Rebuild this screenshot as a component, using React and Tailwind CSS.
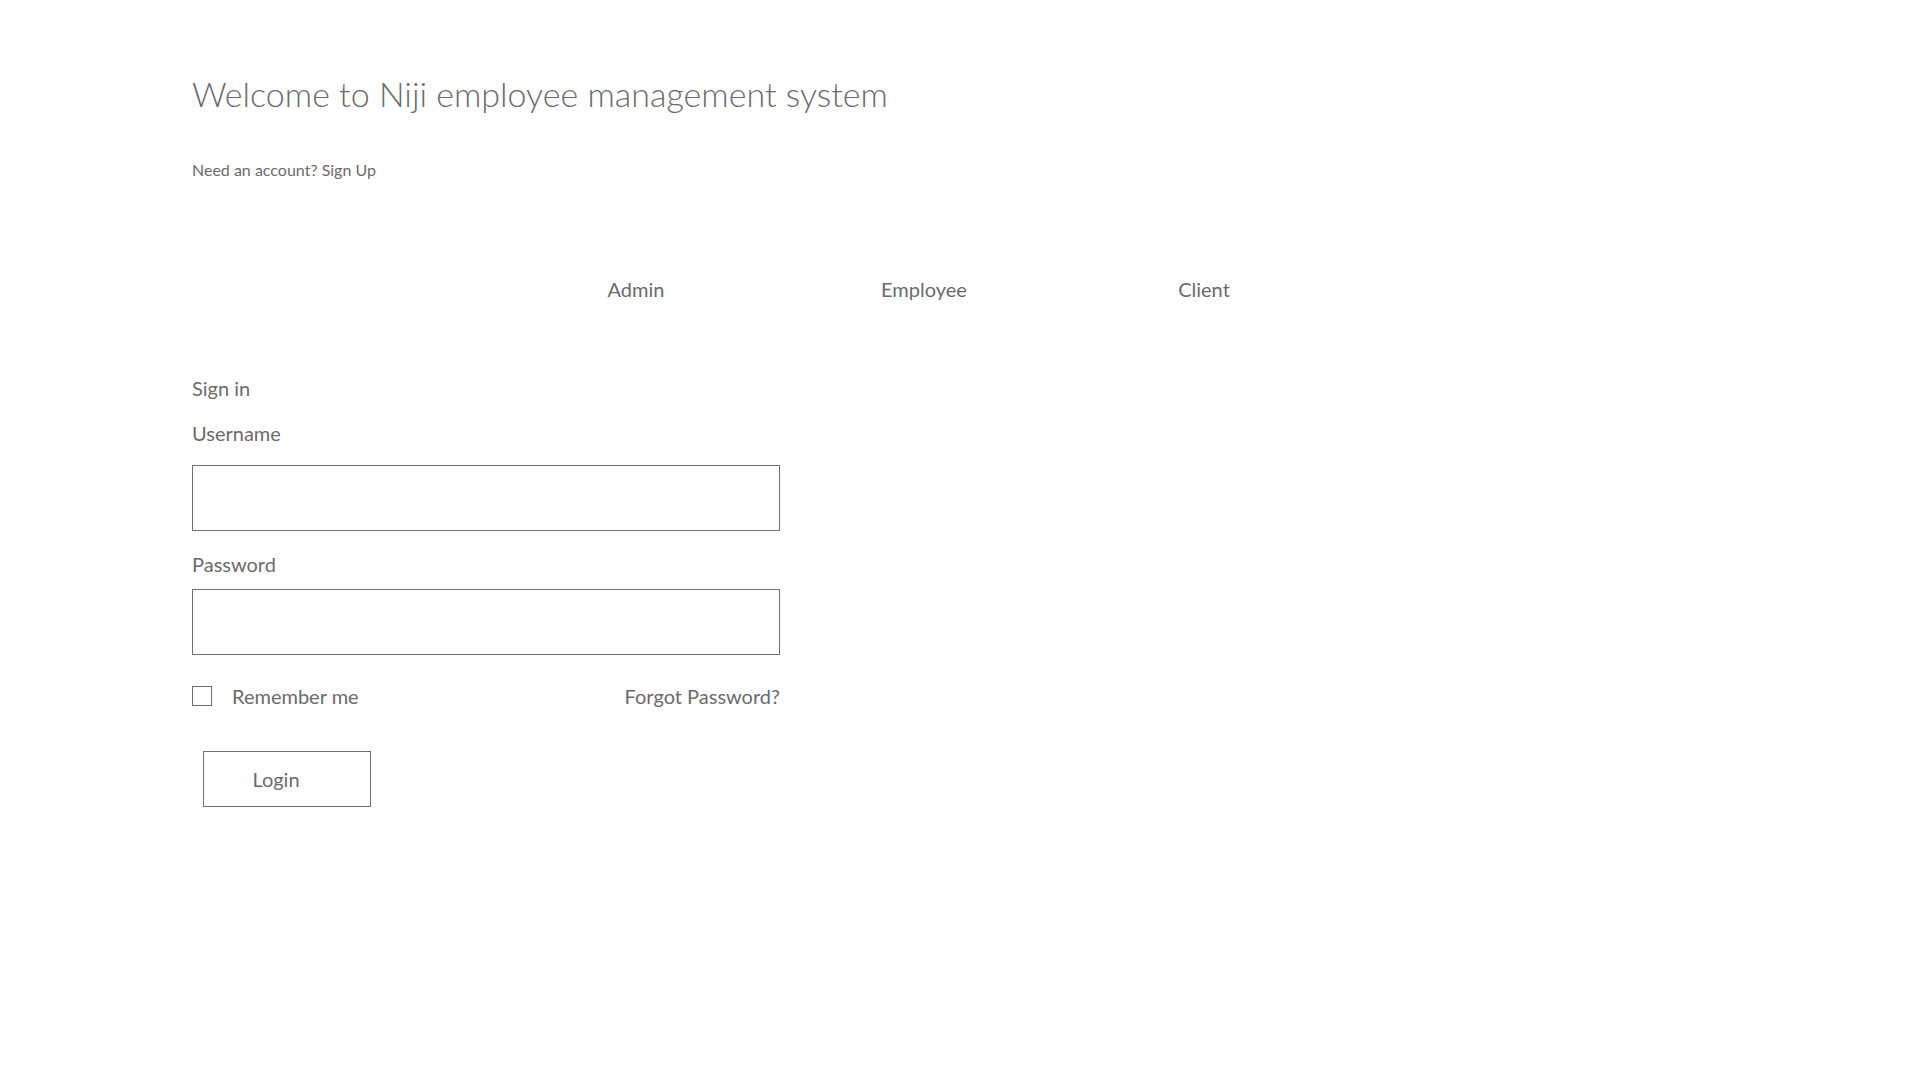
import { useState } from "react";

const tabs = [
	{ label: "Admin", width: "w-[288px]" },
	{ label: "Employee", width: "w-[288px]" },
	{ label: "Client", width: "w-[272px]" },
];

const App = () => {
	const [remember, setRemember] = useState(false);

	return (
		<div className="min-h-screen bg-white px-[192px] pt-[73px] text-[#6b6b6b] font-['Lato','Open_Sans',sans-serif]">
			<h1 className="text-[34px] leading-[42px] font-light">
				Welcome to Niji employee management system
			</h1>
			<p className="mt-[45px] text-[16px] leading-[20px]">
				Need an account? <a href="#">Sign Up</a>
			</p>

			{/* role tabs */}
			<div className="mt-[95px] flex pl-[300px] text-[20px] leading-[28px]">
				{tabs.map((tab) => (
					<button key={tab.label} type="button" className={`${tab.width} text-center`}>
						{tab.label}
					</button>
				))}
			</div>

			<form className="w-[588px]" onSubmit={(e) => e.preventDefault()}>
				<p className="mt-[71px] text-[20px] leading-[28px]">Sign in</p>
				<label className="mt-[17px] block text-[20px] leading-[28px]">Username</label>
				<input
					type="text"
					className="mt-[18px] block h-[66px] w-full border border-[#707070] px-3 text-[20px] outline-none"
				/>
				<label className="mt-[19px] block text-[20px] leading-[28px]">Password</label>
				<input
					type="password"
					className="mt-[11px] block h-[66px] w-full border border-[#707070] px-3 text-[20px] outline-none"
				/>
				<div className="mt-[27px] flex h-[28px] items-center justify-between text-[20px] leading-[28px]">
					<label className="flex items-center gap-[20px]">
						<span
							onClick={() => setRemember(!remember)}
							className="block h-[20px] w-[20px] border border-[#707070]">
							{remember && <span className="m-[4px] block h-[10px] w-[10px] bg-[#666666]" />}
						</span>
						Remember me
					</label>
					<a href="#">Forgot Password?</a>
				</div>
				<button
					type="submit"
					className="ml-[11px] mt-[41px] h-[56px] w-[168px] border border-[#707070] pr-[22px] text-[20px]">
					Login
				</button>
			</form>
		</div>
	);
};

export default App;
